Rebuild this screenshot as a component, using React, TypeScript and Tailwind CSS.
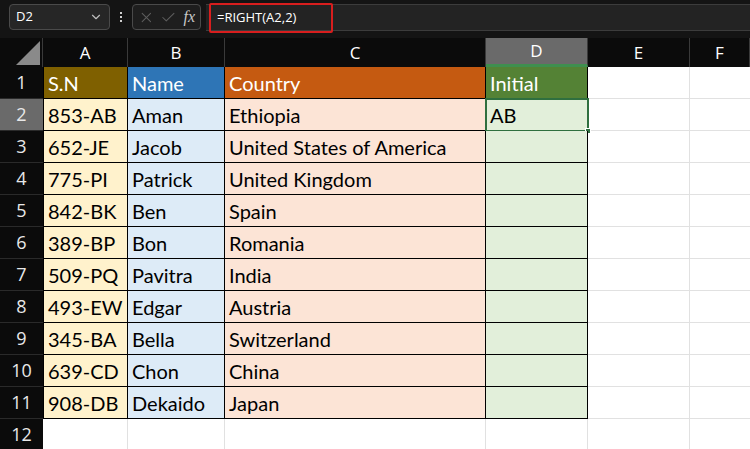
import { ChevronDown, X, Check } from 'lucide-react';

const cols = ['A', 'B', 'C', 'D', 'E', 'F'];

const rows = [
  ['853-AB', 'Aman', 'Ethiopia', 'AB'],
  ['652-JE', 'Jacob', 'United States of America', ''],
  ['775-PI', 'Patrick', 'United Kingdom', ''],
  ['842-BK', 'Ben', 'Spain', ''],
  ['389-BP', 'Bon', 'Romania', ''],
  ['509-PQ', 'Pavitra', 'India', ''],
  ['493-EW', 'Edgar', 'Austria', ''],
  ['345-BA', 'Bella', 'Switzerland', ''],
  ['639-CD', 'Chon', 'China', ''],
  ['908-DB', 'Dekaido', 'Japan', ''],
];

const headFill = ['bg-[#7f6000]', 'bg-[#2e75b6]', 'bg-[#c55a11]', 'bg-[#548235]'];
const bodyFill = ['bg-[#fff2cc]', 'bg-[#ddebf7]', 'bg-[#fce4d6]', 'bg-[#e2efda]'];

const gridCols = 'grid grid-cols-[43px_85px_97px_261px_102px_102px_1fr]';

function Toolbar() {
  return (
    <div className="h-[38px] bg-[#141414] flex items-start pt-[4px] font-['Open_Sans',sans-serif]">
      <div className="ml-[9px] w-[101px] h-[26px] rounded-[4px] border border-[#4a4a4a] bg-[#262626] flex items-center justify-between px-[6px]">
        <span className="text-white text-[13px]">D2</span>
        <ChevronDown size={14} className="text-[#bdbdbd]" />
      </div>
      <div className="w-[22px] h-[26px] flex flex-col items-center justify-center gap-[2px]">
        <span className="w-[2px] h-[2px] bg-[#cfcfcf]" />
        <span className="w-[2px] h-[2px] bg-[#cfcfcf]" />
        <span className="w-[2px] h-[2px] bg-[#cfcfcf]" />
      </div>
      <div className="w-[69px] h-[26px] rounded-[4px] border border-[#4a4a4a] bg-[#1e1e1e] flex items-center px-[5px] gap-[5px]">
        <X size={17} strokeWidth={1.5} className="text-[#5e5e5e]" />
        <Check size={17} strokeWidth={1.5} className="text-[#5e5e5e]" />
        <span className="text-[#c8c8c8] text-[16px] italic font-['Liberation_Serif',serif] leading-none ml-[2px]">fx</span>
      </div>
      <div className="ml-[5px] flex-1 h-[27px] border-y border-[#3c3c3c] bg-[#232323] flex items-center">
        <div className="w-[124px] h-[30px] ml-[3px] border-[2px] border-[#d81e1e] rounded-[2px] flex items-center pl-[6px]">
          <span className="text-white text-[13px]">=RIGHT(A2,2)</span>
        </div>
      </div>
    </div>
  );
}

function HeaderRow() {
  return (
    <div className={`${gridCols} h-[29px] bg-[#0b0b0b] font-['Open_Sans',sans-serif] text-[17px] text-white`}>
      <div className="relative border-r border-[#3a3a3a]">
        <svg className="absolute right-[2px] bottom-[2px]" width="24" height="24" viewBox="0 0 24 24">
          <polygon points="24,0 24,24 0,24" fill="#8a8a8a" />
        </svg>
      </div>
      {cols.map((c) => (
        <div
          key={c}
          className={`flex items-center justify-center border-r border-[#3a3a3a] ${
            c === 'D' ? 'bg-[#6a6a6a] border-b-[3px] border-b-[#3f8f4f]' : ''
          }`}
        >
          {c}
        </div>
      ))}
    </div>
  );
}

function Cell({ text, fill, isHead }: { text: string; fill: string; isHead: boolean }) {
  return (
    <div
      className={`${fill} border-b border-r border-black flex items-end px-[4px] pb-[1px] leading-[28px] ${
        isHead ? 'text-white' : 'text-black'
      }`}
    >
      {text}
    </div>
  );
}

export default function App() {
  const all = [['S.N', 'Name', 'Country', 'Initial'], ...rows, ['', '', '', '']];
  return (
    <div className="w-[750px] h-[449px] overflow-hidden bg-white">
      <Toolbar />
      <HeaderRow />
      <div className="font-['Lato',sans-serif] text-[20px]">
        {all.map((r, i) => {
          const rowNum = i + 1;
          const inTable = rowNum <= 11;
          return (
            <div key={i} className={`${gridCols} h-[32px]`}>
              <div
                className={`flex items-center justify-center font-['Open_Sans',sans-serif] text-[18px] text-[#e8e8e8] border-b border-[#2a2a2a] ${
                  rowNum === 2 ? 'bg-[#6a6a6a]' : 'bg-[#0b0b0b]'
                }`}
              >
                {rowNum}
              </div>
              {r.map((t, j) =>
                inTable ? (
                  <div key={j} className={`${j === 0 ? 'border-l border-black' : ''} flex`}>
                    <div className="relative flex-1 grid">
                      <Cell text={t} fill={rowNum === 1 ? headFill[j] : bodyFill[j]} isHead={rowNum === 1} />
                      {rowNum === 2 && j === 3 && (
                        <div className="absolute -left-[1px] -top-[1px] -right-[1px] -bottom-[1px] border-[2px] border-[#2f6f3f]">
                          <span className="absolute -right-[4px] -bottom-[4px] w-[6px] h-[6px] bg-[#2f6f3f] border border-white" />
                        </div>
                      )}
                    </div>
                  </div>
                ) : (
                  <div key={j} className="border-r border-b border-[#e1e1e1]" />
                )
              )}
              <div className="border-r border-b border-[#e1e1e1]" />
              <div className="border-b border-[#e1e1e1]" />
            </div>
          );
        })}
      </div>
    </div>
  );
}
